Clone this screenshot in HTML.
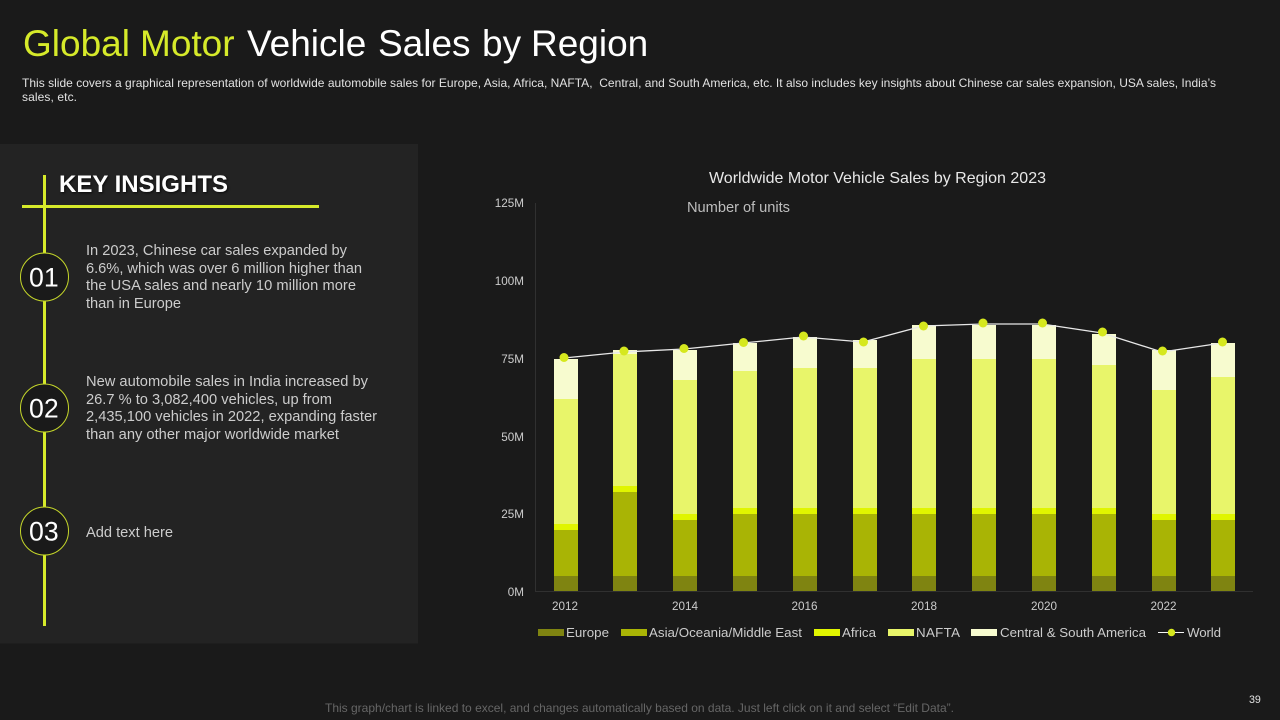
<!DOCTYPE html>
<html lang="en">
<head>
<meta charset="utf-8">
<title>Global Motor Vehicle Sales by Region</title>
<style>
html,body{margin:0;padding:0;background:#1a1a1a;width:1280px;height:720px;overflow:hidden}
svg{display:block}
text{font-family:"Liberation Sans",Arial,sans-serif;white-space:pre}
.d{font-size:12px;fill:#e2e2e2}
.p{font-size:14.67px;fill:#cccccc}
.n{font-size:26.67px;fill:#fff}
.a{font-size:11.7px;fill:#cccccc}
.l{font-size:13.33px;fill:#cccccc}
.k{filter:drop-shadow(1px 1px 1px rgba(0,0,0,.7))}
</style>
</head>
<body>
<svg width="1280" height="720" viewBox="0 0 1280 720" xmlns="http://www.w3.org/2000/svg">
<rect width="1280" height="720" fill="#1a1a1a"/>
<text y="56" font-size="37" fill="#fff"><tspan x="23" fill="#d6ea2a">Global</tspan><tspan x="140" fill="#d6ea2a">Motor</tspan><tspan x="247">Vehicle</tspan><tspan x="378">Sales</tspan><tspan x="482">by</tspan><tspan x="531">Region</tspan></text>
<text class="d" x="22" y="87" textLength="1194" lengthAdjust="spacing">This slide covers a graphical representation of worldwide automobile sales for Europe, Asia, Africa, NAFTA,  Central, and South America, etc. It also includes key insights about Chinese car sales expansion, USA sales, India’s</text>
<text class="d" x="22" y="101" textLength="55" lengthAdjust="spacing">sales, etc.</text>

<rect x="0" y="144" width="418" height="499.500" fill="#232323"/>
<rect x="43" y="175" width="3" height="451" fill="#d6ea2a"/>
<rect x="22" y="205" width="297" height="3" fill="#d6ea2a"/>
<text class="k" x="59" y="192" font-size="24" font-weight="700" fill="#fff" textLength="169" lengthAdjust="spacing">KEY INSIGHTS</text>

<circle cx="44.500" cy="277" r="24" fill="#1a1a1a" stroke="#c4d62a" stroke-width="1"/>
<circle cx="44.500" cy="408" r="24" fill="#1a1a1a" stroke="#c4d62a" stroke-width="1"/>
<circle cx="44.500" cy="531" r="24" fill="#1a1a1a" stroke="#c4d62a" stroke-width="1"/>
<text class="n" x="29" y="286.500">01</text>
<text class="n" x="29" y="417.500">02</text>
<text class="n" x="29" y="540.500">03</text>

<text class="p" x="86" y="255" textLength="261" lengthAdjust="spacing">In 2023, Chinese car sales expanded by</text>
<text class="p" x="86" y="273" textLength="276" lengthAdjust="spacing">6.6%, which was over 6 million higher than</text>
<text class="p" x="86" y="290" textLength="270" lengthAdjust="spacing">the USA sales and nearly 10 million more</text>
<text class="p" x="86" y="308" textLength="95" lengthAdjust="spacing">than in Europe</text>
<text class="p" x="86" y="386" textLength="282" lengthAdjust="spacing">New automobile sales in India increased by</text>
<text class="p" x="86" y="404" textLength="246" lengthAdjust="spacing">26.7 % to 3,082,400 vehicles, up from</text>
<text class="p" x="86" y="421" textLength="291" lengthAdjust="spacing">2,435,100 vehicles in 2022, expanding faster</text>
<text class="p" x="86" y="439" textLength="253" lengthAdjust="spacing">than any other major worldwide market</text>
<text class="p" x="86" y="537" textLength="87" lengthAdjust="spacing">Add text here</text>

<text x="709" y="183" font-size="16" fill="#e8e8e8" textLength="337" lengthAdjust="spacing">Worldwide Motor Vehicle Sales by Region 2023</text>
<text x="687" y="212" font-size="14.67" fill="#bdbdbd" textLength="103" lengthAdjust="spacing">Number of units</text>

<g>
<text class="a" x="524" y="207" text-anchor="end">125M</text>
<text class="a" x="524" y="285" text-anchor="end">100M</text>
<text class="a" x="524" y="363" text-anchor="end">75M</text>
<text class="a" x="524" y="441" text-anchor="end">50M</text>
<text class="a" x="524" y="518" text-anchor="end">25M</text>
<text class="a" x="524" y="596" text-anchor="end">0M</text>
<text class="a" x="565" y="610" text-anchor="middle">2012</text>
<text class="a" x="685" y="610" text-anchor="middle">2014</text>
<text class="a" x="804.500" y="610" text-anchor="middle">2016</text>
<text class="a" x="924" y="610" text-anchor="middle">2018</text>
<text class="a" x="1044" y="610" text-anchor="middle">2020</text>
<text class="a" x="1163.500" y="610" text-anchor="middle">2022</text>
</g>
<path d="M535.500 203V591.500H1253" fill="none" stroke="#303030" stroke-width="1"/>

<g shape-rendering="crispEdges">
<rect x="554" y="359" width="24" height="40" fill="#f7fbcf"/><rect x="554" y="399" width="24" height="125" fill="#e8f56a"/><rect x="554" y="524" width="24" height="6" fill="#e0f500"/><rect x="554" y="530" width="24" height="46" fill="#a9b405"/><rect x="554" y="576" width="24" height="15" fill="#7f8411"/>
<rect x="613" y="350" width="24" height="4" fill="#f7fbcf"/><rect x="613" y="354" width="24" height="132" fill="#e8f56a"/><rect x="613" y="486" width="24" height="6" fill="#e0f500"/><rect x="613" y="492" width="24" height="84" fill="#a9b405"/><rect x="613" y="576" width="24" height="15" fill="#7f8411"/>
<rect x="673" y="350" width="24" height="30" fill="#f7fbcf"/><rect x="673" y="380" width="24" height="134" fill="#e8f56a"/><rect x="673" y="514" width="24" height="6" fill="#e0f500"/><rect x="673" y="520" width="24" height="56" fill="#a9b405"/><rect x="673" y="576" width="24" height="15" fill="#7f8411"/>
<rect x="733" y="343" width="24" height="28" fill="#f7fbcf"/><rect x="733" y="371" width="24" height="137" fill="#e8f56a"/><rect x="733" y="508" width="24" height="6" fill="#e0f500"/><rect x="733" y="514" width="24" height="62" fill="#a9b405"/><rect x="733" y="576" width="24" height="15" fill="#7f8411"/>
<rect x="793" y="337" width="24" height="31" fill="#f7fbcf"/><rect x="793" y="368" width="24" height="140" fill="#e8f56a"/><rect x="793" y="508" width="24" height="6" fill="#e0f500"/><rect x="793" y="514" width="24" height="62" fill="#a9b405"/><rect x="793" y="576" width="24" height="15" fill="#7f8411"/>
<rect x="853" y="340" width="24" height="28" fill="#f7fbcf"/><rect x="853" y="368" width="24" height="140" fill="#e8f56a"/><rect x="853" y="508" width="24" height="6" fill="#e0f500"/><rect x="853" y="514" width="24" height="62" fill="#a9b405"/><rect x="853" y="576" width="24" height="15" fill="#7f8411"/>
<rect x="912" y="325" width="24" height="34" fill="#f7fbcf"/><rect x="912" y="359" width="24" height="149" fill="#e8f56a"/><rect x="912" y="508" width="24" height="6" fill="#e0f500"/><rect x="912" y="514" width="24" height="62" fill="#a9b405"/><rect x="912" y="576" width="24" height="15" fill="#7f8411"/>
<rect x="972" y="325" width="24" height="34" fill="#f7fbcf"/><rect x="972" y="359" width="24" height="149" fill="#e8f56a"/><rect x="972" y="508" width="24" height="6" fill="#e0f500"/><rect x="972" y="514" width="24" height="62" fill="#a9b405"/><rect x="972" y="576" width="24" height="15" fill="#7f8411"/>
<rect x="1032" y="325" width="24" height="34" fill="#f7fbcf"/><rect x="1032" y="359" width="24" height="149" fill="#e8f56a"/><rect x="1032" y="508" width="24" height="6" fill="#e0f500"/><rect x="1032" y="514" width="24" height="62" fill="#a9b405"/><rect x="1032" y="576" width="24" height="15" fill="#7f8411"/>
<rect x="1092" y="334" width="24" height="31" fill="#f7fbcf"/><rect x="1092" y="365" width="24" height="143" fill="#e8f56a"/><rect x="1092" y="508" width="24" height="6" fill="#e0f500"/><rect x="1092" y="514" width="24" height="62" fill="#a9b405"/><rect x="1092" y="576" width="24" height="15" fill="#7f8411"/>
<rect x="1152" y="350" width="24" height="40" fill="#f7fbcf"/><rect x="1152" y="390" width="24" height="124" fill="#e8f56a"/><rect x="1152" y="514" width="24" height="6" fill="#e0f500"/><rect x="1152" y="520" width="24" height="56" fill="#a9b405"/><rect x="1152" y="576" width="24" height="15" fill="#7f8411"/>
<rect x="1211" y="343" width="24" height="34" fill="#f7fbcf"/><rect x="1211" y="377" width="24" height="137" fill="#e8f56a"/><rect x="1211" y="514" width="24" height="6" fill="#e0f500"/><rect x="1211" y="520" width="24" height="56" fill="#a9b405"/><rect x="1211" y="576" width="24" height="15" fill="#7f8411"/>
</g>

<polyline points="564,358 624,352 684,349 743,343 803,337 863,342 923,326 983,324 1042,324 1102,333 1162,352 1222,343" fill="none" stroke="#e8e8e8" stroke-width="1.300"/>
<g fill="#d6e81e">
<circle cx="564" cy="357.500" r="4.500"/><circle cx="624" cy="351" r="4.500"/><circle cx="684" cy="348.500" r="4.500"/><circle cx="743.500" cy="342.500" r="4.500"/><circle cx="803.500" cy="336" r="4.500"/><circle cx="863.500" cy="342" r="4.500"/><circle cx="923.500" cy="326" r="4.500"/><circle cx="983" cy="323" r="4.500"/><circle cx="1042.500" cy="323" r="4.500"/><circle cx="1102.500" cy="332" r="4.500"/><circle cx="1162.500" cy="351" r="4.500"/><circle cx="1222.500" cy="342" r="4.500"/>
</g>

<rect x="538" y="629" width="26" height="7" fill="#7f8411"/>
<text class="l" x="566" y="637" textLength="43" lengthAdjust="spacing">Europe</text>
<rect x="621" y="629" width="26" height="7" fill="#a9b405"/>
<text class="l" x="649" y="637" textLength="153" lengthAdjust="spacing">Asia/Oceania/Middle East</text>
<rect x="814" y="629" width="26" height="7" fill="#e0f500"/>
<text class="l" x="842" y="637" textLength="34" lengthAdjust="spacing">Africa</text>
<rect x="888" y="629" width="26" height="7" fill="#e8f56a"/>
<text class="l" x="916" y="637" textLength="44" lengthAdjust="spacing">NAFTA</text>
<rect x="971" y="629" width="26" height="7" fill="#f7fbcf"/>
<text class="l" x="1000" y="637" textLength="146" lengthAdjust="spacing">Central &amp; South America</text>
<path d="M1158 632.500H1184" stroke="#f5f5f5" stroke-width="1"/>
<circle cx="1171.500" cy="632.500" r="3.700" fill="#d6e81e"/>
<text class="l" x="1187" y="637" textLength="34" lengthAdjust="spacing">World</text>

<text x="1249" y="703" font-size="10.670" fill="#e2e2e2">39</text>
<text x="325" y="712" font-size="12" fill="#666666" textLength="629" lengthAdjust="spacing">This graph/chart is linked to excel, and changes automatically based on data. Just left click on it and select “Edit Data”.</text>
</svg>
</body>
</html>
